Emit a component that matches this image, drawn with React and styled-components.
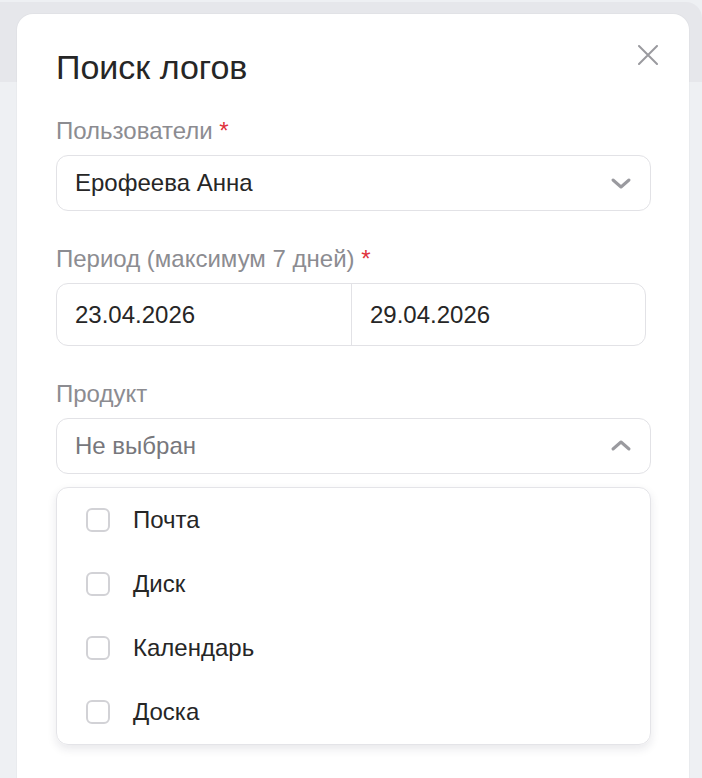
import React from 'react';
import styled, { createGlobalStyle } from 'styled-components';

const GlobalStyle = createGlobalStyle`
  html, body {
    margin: 0;
    padding: 0;
    height: 100%;
    overflow: hidden;
    background: #e6e7eb;
    font-family: 'Liberation Sans', Arial, sans-serif;
  }
`;

const products = ['Почта', 'Диск', 'Календарь', 'Доска'];

export default function App() {
  return (
    <>
      <GlobalStyle />
      <Backdrop>
        <PageHeader />
        <Modal>
          <Header>
            <Title>Поиск логов</Title>
            <CloseButton aria-label="Закрыть">
              <svg width="20" height="20" viewBox="0 0 20 20">
                <path d="M1 1 L19 19 M19 1 L1 19" stroke="#9a9a9f" strokeWidth="2" strokeLinecap="round" />
              </svg>
            </CloseButton>
          </Header>

          <Field>
            <Label>
              Пользователи <Required>*</Required>
            </Label>
            <Select>
              <SelectValue>Ерофеева Анна</SelectValue>
              <Chevron />
            </Select>
          </Field>

          <Field>
            <Label>
              Период (максимум 7 дней) <Required>*</Required>
            </Label>
            <DateRange>
              <DateCell>23.04.2026</DateCell>
              <DateCell>29.04.2026</DateCell>
            </DateRange>
          </Field>

          <Field>
            <Label>Продукт</Label>
            <Select>
              <SelectValue placeholder>Не выбран</SelectValue>
              <Chevron up />
            </Select>
            <Menu>
              {products.map((p) => (
                <Option key={p}>
                  <Checkbox />
                  <OptionText>{p}</OptionText>
                </Option>
              ))}
            </Menu>
          </Field>
        </Modal>
      </Backdrop>
    </>
  );
}

function Chevron({ up }) {
  return (
    <ChevronIcon width="22" height="14" viewBox="0 0 22 14" $up={up}>
      <path d="M3 4 L11 11 L19 4" fill="none" stroke="#9a9a9f" strokeWidth="3" strokeLinecap="round" strokeLinejoin="round" />
    </ChevronIcon>
  );
}

const Backdrop = styled.div`
  position: relative;
  height: 100vh;
  padding: 14px 13px 0 17px;
  box-sizing: border-box;
  background: #eef0f3;
`;

const PageHeader = styled.div`
  position: absolute;
  top: 2px;
  left: 0;
  right: 0;
  height: 80px;
  background: #e6e7eb;
  border-top-right-radius: 16px;
`;

const Modal = styled.div`
  position: relative;
  background: #ffffff;
  border-radius: 16px;
  padding: 31px 38px 40px 39px;
  height: 900px;
  box-sizing: border-box;
  box-shadow: 0 0 0 1px rgba(0, 0, 0, 0.02);
`;

const Header = styled.div`
  display: flex;
  justify-content: space-between;
  align-items: flex-start;
  margin-bottom: 28px;
`;

const Title = styled.h1`
  margin: 0;
  font-size: 34px;
  font-weight: 400;
  line-height: 44px;
  color: #262626;
`;

const CloseButton = styled.button`
  border: none;
  background: none;
  padding: 0;
  margin-top: 0;
  margin-right: -7px;
  cursor: pointer;
  line-height: 0;
`;

const Field = styled.div`
  display: flex;
  flex-direction: column;
  margin-bottom: 34px;
`;

const Label = styled.div`
  font-size: 24px;
  line-height: 28px;
  color: #8c8c91;
  margin-bottom: 10px;
`;

const Required = styled.span`
  color: #e0323c;
`;

const Select = styled.div`
  display: flex;
  align-items: center;
  justify-content: space-between;
  height: 56px;
  box-sizing: border-box;
  border: 1px solid #e2e2e6;
  border-radius: 12px;
  padding: 0 18px 0 18px;
`;

const SelectValue = styled.span`
  font-size: 24px;
  color: ${(p) => (p.placeholder ? '#77777c' : '#262626')};
`;

const ChevronIcon = styled.svg`
  transform: ${(p) => (p.$up ? 'rotate(180deg)' : 'none')};
`;

const DateRange = styled.div`
  display: grid;
  grid-template-columns: 1fr 1fr;
  width: 590px;
  height: 63px;
  box-sizing: border-box;
  border: 1px solid #e2e2e6;
  border-radius: 12px;
`;

const DateCell = styled.div`
  display: flex;
  align-items: center;
  padding-left: 18px;
  font-size: 24px;
  color: #262626;
  & + & {
    border-left: 1px solid #e2e2e6;
  }
`;

const Menu = styled.div`
  margin-top: 13px;
  border: 1px solid #e4e4e8;
  border-radius: 12px;
  box-shadow: 0 4px 10px rgba(30, 30, 60, 0.1);
  padding: 0;
`;

const Option = styled.div`
  display: flex;
  align-items: center;
  height: 64px;
  padding-left: 29px;
`;

const Checkbox = styled.span`
  width: 24px;
  height: 24px;
  box-sizing: border-box;
  border: 2px solid #d2d2d6;
  border-radius: 6px;
  margin-right: 23px;
`;

const OptionText = styled.span`
  font-size: 24px;
  color: #262626;
`;
